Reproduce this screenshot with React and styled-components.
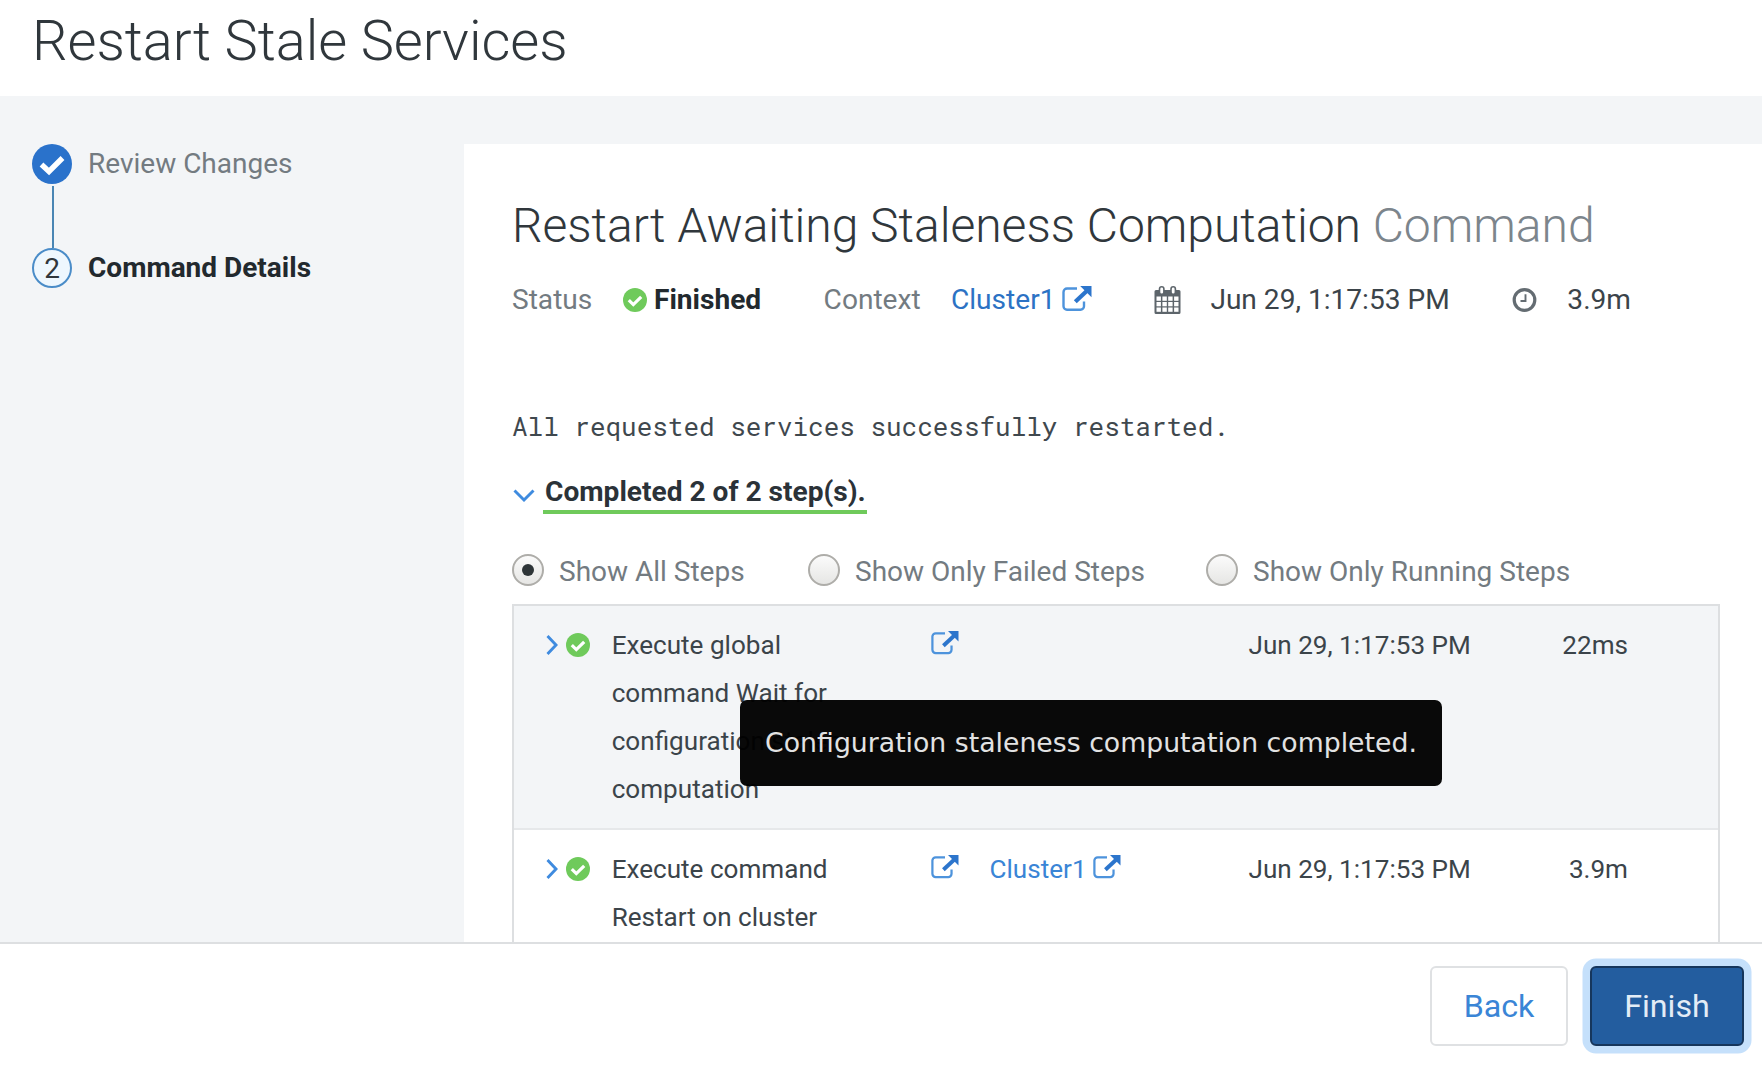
import React from "react";
import styled, { createGlobalStyle, css } from "styled-components";

const color = {
  title: "#30373c",
  body: "#3b444a",
  strong: "#22292e",
  muted: "#737b81",
  link: "#3a85d6",
  linkDark: "#2c72c4",
  green: "#6fca5b",
  shade: "#f3f5f7",
  line: "#dddfe1",
};

const GlobalStyle = createGlobalStyle`
  * { box-sizing: border-box; }
  body {
    margin: 0;
    background: #fff;
    color: ${color.body};
    font-family: Roboto, "Noto Sans", sans-serif;
    overflow: hidden;
  }
`;

const Page = styled.div`
  display: flex;
  flex-direction: column;
  height: 1068px;
`;

const Header = styled.header`
  flex: none;
  height: 96px;
  padding-left: 32px;
`;

const PageTitle = styled.h1`
  margin: 0;
  font-size: 56px;
  font-weight: 300;
  line-height: 82px;
  letter-spacing: -0.04px;
  color: ${color.title};
`;

const Main = styled.main`
  flex: none;
  display: flex;
  height: 846px;
  padding-top: 48px;
  background: ${color.shade};
  overflow: hidden;
`;

const Sidebar = styled.nav`
  flex: none;
  width: 464px;
  padding-left: 32px;
`;

const Step = styled.div`
  display: flex;
  align-items: center;
  gap: 16px;
  height: 40px;
`;

const StepLabel = styled.span`
  font-size: 28px;
  line-height: 40px;
  font-weight: ${(p) => (p.$current ? 700 : 400)};
  color: ${(p) => (p.$current ? color.strong : color.muted)};
`;

const StepNumber = styled.span`
  display: flex;
  align-items: center;
  justify-content: center;
  width: 40px;
  height: 40px;
  border: 2px solid #4a8cc8;
  border-radius: 50%;
  background: #eef7fe;
  font-size: 28px;
  color: ${color.title};
`;

const Connector = styled.div`
  width: 2px;
  height: 62px;
  margin: 2px 0 0 20px;
  background: #4a86b4;
`;

const Panel = styled.section`
  flex: 1;
  padding: 48px 42px 0 48px;
  background: #fff;
`;

const PanelTitle = styled.h2`
  margin: 0;
  font-size: 48px;
  font-weight: 300;
  line-height: 67px;
  letter-spacing: -0.01px;
  white-space: nowrap;
  color: ${color.title};

  span { color: #7c858c; }
`;

const StatusRow = styled.div`
  display: grid;
  grid-template-columns: 111px 200.6px 127.4px 203px 56.4px 301.6px 55.4px auto;
  grid-template-rows: 40px;
  align-items: center;
  margin-top: 21px;
  font-size: 28.1px;
  line-height: 40px;
  white-space: nowrap;
`;

const Cell = styled.span`
  display: flex;
  align-items: center;
  gap: ${(p) => p.$gap || 0}px;
  ${(p) => p.$muted && css`color: ${color.muted};`}
  ${(p) => p.$bold && css`
    font-weight: 700;
    color: ${color.strong};
  `}
`;

const Link = styled.a`
  display: inline-flex;
  align-items: center;
  gap: 6px;
  color: ${color.linkDark};
`;

const RowLink = styled(Link)`
  color: ${color.link};
`;

const Message = styled.pre`
  margin: 86px 0 0;
  font-family: "Roboto Mono", "DejaVu Sans Mono", monospace;
  font-size: 25.97px;
  line-height: 40px;
  color: #3f484e;
`;

const Summary = styled.div`
  display: flex;
  align-items: center;
  gap: 8px;
  margin: 26px 0 0 1px;

  > svg { margin-top: 4px; }
`;

const SummaryText = styled.span`
  height: 42px;
  padding: 0 1px 0 2px;
  border-bottom: 4px solid ${color.green};
  font-size: 28.1px;
  font-weight: 700;
  line-height: 40px;
  color: #2b3238;
`;

const Filters = styled.div`
  display: grid;
  grid-template-columns: 296px 398px auto;
  margin-top: 34px;
`;

const Filter = styled.label`
  display: flex;
  align-items: center;
  gap: 15px;
  height: 48px;
  font-size: 28px;
  line-height: 48px;
  color: ${color.muted};
`;

const Radio = styled.span`
  display: flex;
  align-items: center;
  justify-content: center;
  width: 32px;
  height: 32px;
  margin-bottom: 4px;
  border: 2px solid #aeada9;
  border-radius: 50%;
  background: linear-gradient(#fbfbfb, #e6e6e4);

  &::after {
    content: "";
    width: 12px;
    height: 12px;
    border-radius: 50%;
    background: ${(p) => (p.$on ? "#2e3538" : "transparent")};
  }
`;

const Table = styled.div`
  position: relative;
  margin-top: 8px;
  border: 2px solid ${color.line};
`;

const Row = styled.div`
  display: grid;
  grid-template-columns: 20px 45.7px 319.8px 58px 259px 221.5px 158px;
  min-height: 224px;
  padding: 15px 0 15px 32px;
  border-bottom: 2px solid #e6e8ea;
  background: ${(p) => (p.$shaded ? color.shade : "#fff")};
  font-size: 26.1px;
  line-height: 48px;
  white-space: nowrap;
`;

const IconCell = styled.span`
  display: flex;
  align-items: center;
  height: 48px;
  padding-bottom: ${(p) => p.$lift || 0}px;
`;

const Name = styled.span`
  white-space: pre;
`;

const Duration = styled.span`
  text-align: right;
`;

const Tooltip = styled.div`
  position: absolute;
  top: 94px;
  left: 226px;
  width: 702px;
  height: 86px;
  border-radius: 7px;
  background: rgba(0, 0, 0, 0.965);
  color: #e2e2e2;
  font-family: "DejaVu Sans", sans-serif;
  font-size: 26.72px;
  line-height: 85px;
  text-align: center;
  white-space: nowrap;
`;

const Footer = styled.footer`
  flex: 1;
  display: flex;
  justify-content: flex-end;
  align-items: flex-start;
  gap: 22px;
  padding: 22px 18px 0 0;
  border-top: 2px solid ${color.line};
  background: #fff;
`;

const Button = styled.button`
  width: 138px;
  height: 80px;
  padding: 0;
  border: 2px solid #dfe1e3;
  border-radius: 6px;
  background: #fff;
  color: ${color.link};
  font: 32.2px/76px Roboto, sans-serif;

  ${(p) => p.$primary && css`
    width: 154px;
    border-color: #16365c;
    background: #235d9f;
    color: #e3ecf6;
    box-shadow: 0 0 0 7.5px #c5e0fb;
  `}
`;

const DoneIcon = () => (
  <svg width="40" height="40" viewBox="0 0 40 40">
    <circle cx="20" cy="20" r="20" fill="#2a72cb" />
    <path d="M9.5 20.5 17 27.5 30.5 14" fill="none" stroke="#fff" strokeWidth="5.4" />
  </svg>
);

const CheckIcon = () => (
  <svg width="24" height="24" viewBox="0 0 24 24">
    <circle cx="12" cy="12" r="12" fill={color.green} />
    <path d="M5.8 12.2 10.3 16.6 18.2 8.8" fill="none" stroke="#fff" strokeWidth="3.2" />
  </svg>
);

const ExternalIcon = ({ width = 30 }) => (
  <svg width={width} height={width * 0.84} viewBox="0 0 30 25.2">
    <path
      d="M15 2.5H5A3.5 3.5 0 0 0 1.5 6v14.2A3.5 3.5 0 0 0 5 23.7h13.5a3.5 3.5 0 0 0 3.5-3.5V15.5"
      fill="none"
      stroke="#4d93dc"
      strokeWidth="2.4"
    />
    <path d="M13.3 15.8 25 4.8" stroke="#2c75cc" strokeWidth="4.2" />
    <path d="M18.2 0h11.3V11.2Z" fill="#2c75cc" />
  </svg>
);

const CalendarIcon = () => (
  <svg width="27" height="28" viewBox="0 0 27 28">
    <path d="M2 4h23a1.5 1.5 0 0 1 1.5 1.5V26.5a1.5 1.5 0 0 1-1.5 1.5H2A1.5 1.5 0 0 1 .5 26.5v-21A1.5 1.5 0 0 1 2 4Z" fill="#5d656b" />
    <g fill="#fff">
      {[10.5, 16, 21.5].map((y) =>
        [2.5, 8.4, 14.2, 20.1].map((x) => <rect key={`${x}-${y}`} x={x} y={y} width="4.4" height="4.3" />)
      )}
    </g>
    <rect x="5.5" y=".8" width="4.4" height="7.6" rx="2.2" fill="#fff" stroke="#5d656b" strokeWidth="1.6" />
    <rect x="17" y=".8" width="4.4" height="7.6" rx="2.2" fill="#fff" stroke="#5d656b" strokeWidth="1.6" />
  </svg>
);

const ClockIcon = () => (
  <svg width="25" height="24" viewBox="0 0 25 24">
    <circle cx="12.5" cy="12" r="10.3" fill="none" stroke="#646c72" strokeWidth="3.2" />
    <path d="M13.5 6.2V13H8.5" fill="none" stroke="#646c72" strokeWidth="1.9" />
  </svg>
);

const ChevronDown = () => (
  <svg width="22" height="13" viewBox="0 0 22 13">
    <path d="M1.5 1.5 11 11 20.5 1.5" fill="none" stroke="#3f8bdf" strokeWidth="2.9" />
  </svg>
);

const ChevronRight = () => (
  <svg width="12" height="20" viewBox="0 0 12 20">
    <path d="M1.5 1 10 10 1.5 19" fill="none" stroke="#3f8bdf" strokeWidth="2.9" />
  </svg>
);

const filters = ["Show All Steps", "Show Only Failed Steps", "Show Only Running Steps"];

const steps = [
  {
    name: "Execute global\ncommand Wait for\nconfiguration staleness\ncomputation",
    date: "Jun 29, 1:17:53 PM",
    duration: "22ms",
  },
  {
    name: "Execute command\nRestart on cluster",
    context: "Cluster1",
    date: "Jun 29, 1:17:53 PM",
    duration: "3.9m",
  },
];

export default function App() {
  return (
    <Page>
      <GlobalStyle />
      <Header>
        <PageTitle>Restart Stale Services</PageTitle>
      </Header>
      <Main>
        <Sidebar>
          <Step>
            <DoneIcon />
            <StepLabel>Review Changes</StepLabel>
          </Step>
          <Connector />
          <Step>
            <StepNumber>2</StepNumber>
            <StepLabel $current>Command Details</StepLabel>
          </Step>
        </Sidebar>
        <Panel>
          <PanelTitle>
            Restart Awaiting Staleness Computation <span>Command</span>
          </PanelTitle>
          <StatusRow>
            <Cell $muted>Status</Cell>
            <Cell $bold $gap={7}>
              <CheckIcon />
              Finished
            </Cell>
            <Cell $muted>Context</Cell>
            <Cell>
              <Link>
                Cluster1
                <IconCell $lift={3}><ExternalIcon /></IconCell>
              </Link>
            </Cell>
            <CalendarIcon />
            <Cell>Jun 29, 1:17:53 PM</Cell>
            <ClockIcon />
            <Cell>3.9m</Cell>
          </StatusRow>
          <Message>All requested services successfully restarted.</Message>
          <Summary>
            <ChevronDown />
            <SummaryText>Completed 2 of 2 step(s).</SummaryText>
          </Summary>
          <Filters>
            {filters.map((label, i) => (
              <Filter key={label}>
                <Radio $on={i === 0} />
                {label}
              </Filter>
            ))}
          </Filters>
          <Table>
            {steps.map((step, i) => (
              <Row key={step.name} $shaded={i === 0}>
                <IconCell><ChevronRight /></IconCell>
                <IconCell><CheckIcon /></IconCell>
                <Name>{step.name}</Name>
                <IconCell $lift={4}><ExternalIcon width={28} /></IconCell>
                <span>
                  {step.context && (
                    <RowLink>
                      {step.context}
                      <IconCell $lift={4}><ExternalIcon width={28} /></IconCell>
                    </RowLink>
                  )}
                </span>
                <span>{step.date}</span>
                <Duration>{step.duration}</Duration>
              </Row>
            ))}
            <Tooltip>Configuration staleness computation completed.</Tooltip>
          </Table>
        </Panel>
      </Main>
      <Footer>
        <Button>Back</Button>
        <Button $primary>Finish</Button>
      </Footer>
    </Page>
  );
}
